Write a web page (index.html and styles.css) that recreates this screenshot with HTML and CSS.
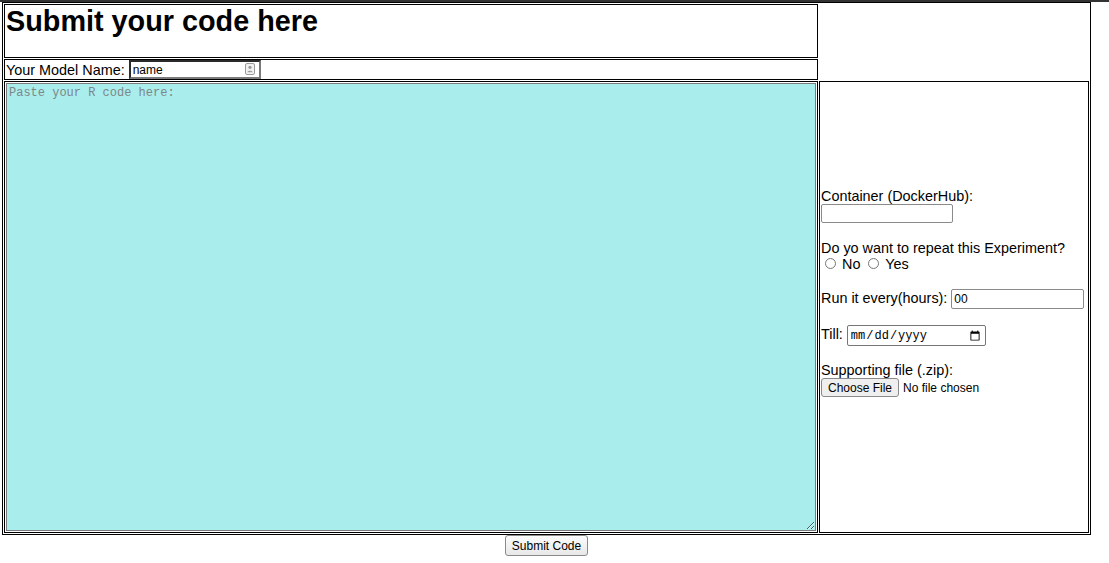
FILE: index.html
```html
<!DOCTYPE html>
<html>
<head>
<meta charset="utf-8">
<title>Submit your code</title>
<link rel="stylesheet" href="styles.css">
</head>
<body>
<div class="topbar"></div>
<form class="sheet">
  <div class="cell head"><h1>Submit your code here</h1></div>
  <div class="cell model">
    <span class="label">Your Model Name:</span>
    <span class="namewrap">
      <input class="name" type="text" value="name">
      <svg class="autofill" width="10" height="12" viewBox="0 0 10 12">
        <rect x="0.5" y="0.5" width="9" height="11" rx="1.5" fill="#f2f2f2" stroke="#9a9a9a"/>
        <circle cx="5" cy="4.3" r="1.6" fill="#9a9a9a"/>
        <path d="M2.3 9.3 C2.3 7.2 7.7 7.2 7.7 9.3 Z" fill="#9a9a9a"/>
      </svg>
    </span>
  </div>
  <div class="cell editor"><textarea class="code" placeholder="Paste your R code here:"></textarea></div>
  <div class="cell side">
    <div class="opts">
      Container (DockerHub):<br>
      <input class="box container" type="text"><br><br>
      Do yo want to repeat this Experiment?<br>
      <input class="radio" type="radio" name="rep"> No <input class="radio" type="radio" name="rep"> Yes<br><br>
      Run it every(hours): <input class="box hours" type="text" value="00"><br><br>
      Till: <input class="date" type="date"><br><br>
      Supporting file (.zip):<br>
      <input class="file" type="file"><br><br>
    </div>
  </div>
</form>
<div class="actions"><button class="submit" type="button">Submit Code</button></div>
</body>
</html>
```
FILE: styles.css
```css
html, body {
  margin: 0;
  padding: 0;
  background: #fff;
}
body {
  font-family: "Liberation Sans", Arial, sans-serif;
  font-size: 14.4px;
  color: #000;
}
.topbar {
  height: 2px;
  background: #333;
}
.sheet {
  margin: 0 0 0 2px;
  width: 1089px;
  box-sizing: border-box;
  border: 1px solid #000;
  padding: 1px;
  display: grid;
  grid-template-columns: 814px 270px;
  grid-template-rows: auto auto 452px;
  gap: 1px;
}
.cell {
  border: 1px solid #000;
  box-sizing: border-box;
  padding: 1px;
  min-width: 0;
}
.head {
  grid-column: 1;
  grid-row: 1;
  height: 54px;
}
.head h1 {
  margin: 0;
  font-size: 28.8px;
  line-height: 30px;
  font-weight: bold;
}
.model {
  grid-column: 1;
  grid-row: 2;
  height: 21px;
  padding: 0 1px;
  display: flex;
  align-items: center;
}
.label {
  margin-right: 4px;
}
.namewrap {
  position: relative;
  display: inline-block;
  height: 19px;
}
.name {
  box-sizing: border-box;
  width: 132px;
  height: 19px;
  margin: 0;
  padding: 0 2px;
  border: 2px solid;
  border-color: #2a2a2a #7a7a7a #7a7a7a #2a2a2a;
  font-family: "Liberation Sans", Arial, sans-serif;
  font-size: 12px;
  color: #000;
  background: #fff;
  outline: none;
}
.autofill {
  position: absolute;
  right: 6px;
  top: 3px;
}
.editor {
  grid-column: 1;
  grid-row: 3;
}
.code {
  display: block;
  box-sizing: border-box;
  width: 810px;
  height: 448px;
  margin: 0;
  padding: 2px;
  border: 1px solid #7a7a7a;
  background: #aaeded;
  font-family: "Liberation Mono", "Courier New", monospace;
  font-size: 12px;
  color: #000;
}
.code::placeholder {
  color: #7d8787;
}
.side {
  grid-column: 2;
  grid-row: 3;
  display: flex;
  flex-direction: column;
  justify-content: center;
}
.opts {
  line-height: 16.5px;
  padding-bottom: 13px;
}
.box {
  box-sizing: border-box;
  height: 19px;
  margin: 0;
  padding: 0 2px;
  border: 1px solid #8a8a8a;
  border-radius: 2px;
  font-family: "Liberation Sans", Arial, sans-serif;
  font-size: 12px;
  vertical-align: baseline;
}
.container {
  width: 132px;
}
.hours {
  width: 133px;
  height: 20px;
}
.radio {
  width: 11px;
  height: 11px;
  margin: 2px 2px 0 4px;
}
.date {
  box-sizing: border-box;
  width: 139px;
  height: 21px;
  margin: -1px 0;
  padding: 0 2px;
  border: 1px solid #767676;
  border-radius: 2px;
  font-family: "Liberation Mono", "Courier New", monospace;
  font-size: 12px;
}
.file {
  font-family: "Liberation Sans", Arial, sans-serif;
  font-size: 12px;
  margin: 0;
}
.file::file-selector-button {
  font-family: "Liberation Sans", Arial, sans-serif;
  font-size: 12px;
  height: 19px;
  padding: 0 6px;
  margin: 0 4px 0 0;
  border: 1px solid #8a8a8a;
  border-radius: 3px;
  background: #efefef;
  color: #000;
}
.actions {
  width: 1089px;
  margin-left: 2px;
  display: flex;
  justify-content: center;
}
.submit {
  box-sizing: border-box;
  width: 83px;
  height: 21px;
  padding: 0;
  font-family: "Liberation Sans", Arial, sans-serif;
  font-size: 12px;
  color: #000;
  border: 1px solid #8a8a8a;
  border-radius: 3px;
  background: linear-gradient(#fbfbfb, #e8e8e8);
}
```
